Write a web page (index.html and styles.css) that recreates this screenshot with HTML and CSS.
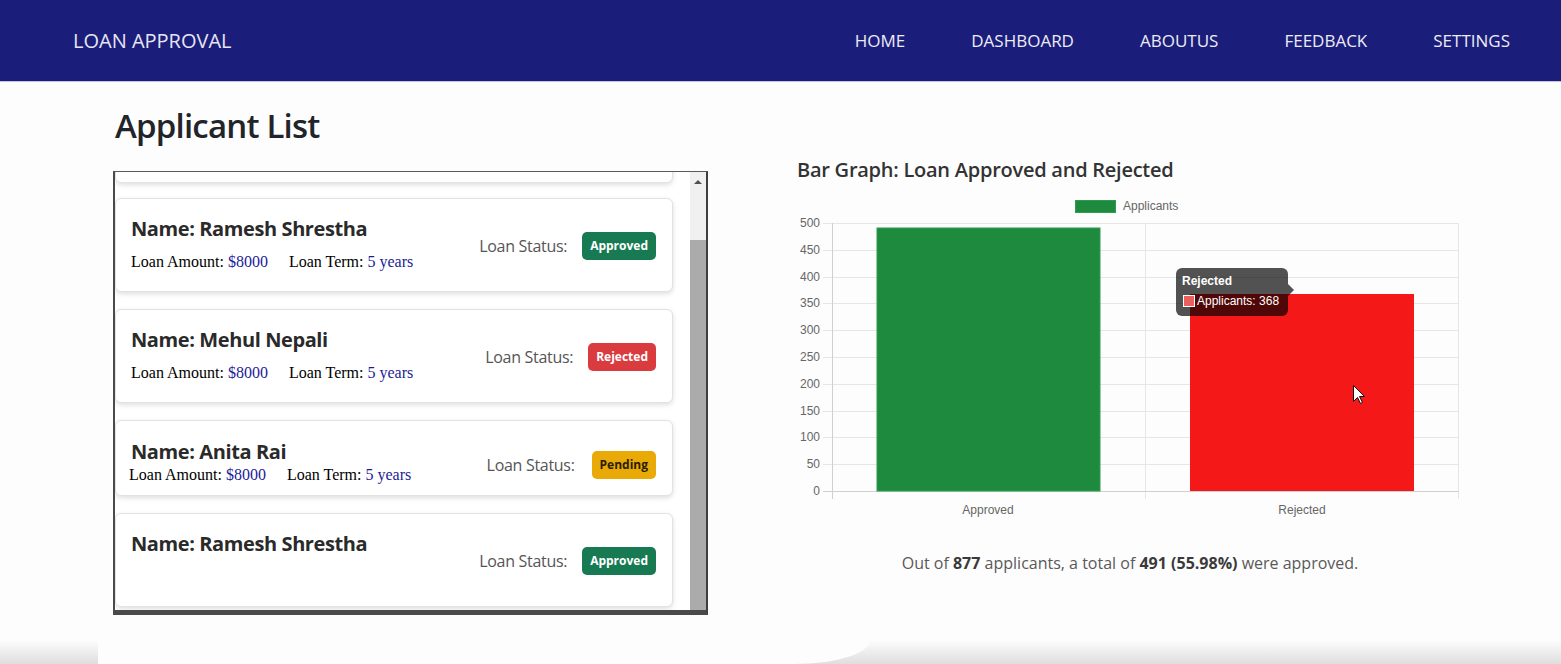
FILE: index.html
```html
<!DOCTYPE html>
<html lang="en">
<head>
<meta charset="utf-8">
<title>Loan Approval</title>
<link rel="stylesheet" href="styles.css">
</head>
<body>
<nav class="navbar">
  <a class="brand" href="#">LOAN APPROVAL</a>
  <ul class="nav-links">
    <li><a href="#">HOME</a></li>
    <li><a href="#">DASHBOARD</a></li>
    <li><a href="#">ABOUTUS</a></li>
    <li><a href="#">FEEDBACK</a></li>
    <li><a href="#">SETTINGS</a></li>
  </ul>
</nav>

<main class="main">
  <section class="left-col">
    <h1 class="page-title">Applicant List</h1>
    <div class="list-box">
      <div class="list-scroll">
        <div class="card card-partial"></div>

        <div class="card">
          <div class="card-info">
            <h5 class="name">Name: Ramesh Shrestha</h5>
            <p class="details">Loan Amount: <span class="val">$8000</span><span class="sep"></span>Loan Term: <span class="val">5 years</span></p>
          </div>
          <div class="status"><span class="status-label">Loan Status:</span><span class="badge badge-approved">Approved</span></div>
        </div>

        <div class="card">
          <div class="card-info">
            <h5 class="name">Name: Mehul Nepali</h5>
            <p class="details">Loan Amount: <span class="val">$8000</span><span class="sep"></span>Loan Term: <span class="val">5 years</span></p>
          </div>
          <div class="status"><span class="status-label">Loan Status:</span><span class="badge badge-rejected">Rejected</span></div>
        </div>

        <div class="card card-short">
          <div class="card-info">
            <h5 class="name">Name: Anita Rai</h5>
            <p class="details">Loan Amount: <span class="val">$8000</span><span class="sep"></span>Loan Term: <span class="val">5 years</span></p>
          </div>
          <div class="status"><span class="status-label">Loan Status:</span><span class="badge badge-pending">Pending</span></div>
        </div>

        <div class="card">
          <div class="card-info">
            <h5 class="name">Name: Ramesh Shrestha</h5>
            <p class="details"></p>
          </div>
          <div class="status"><span class="status-label">Loan Status:</span><span class="badge badge-approved">Approved</span></div>
        </div>
      </div>
      <div class="scrollbar">
        <div class="scroll-arrow"></div>
        <div class="scroll-track"><div class="scroll-thumb"></div></div>
      </div>
    </div>
  </section>

  <section class="right-col">
    <h4 class="chart-title">Bar Graph: Loan Approved and Rejected</h4>
    <svg class="chart" width="680" height="335" viewBox="0 0 680 335" xmlns="http://www.w3.org/2000/svg">
      <g class="grid" stroke="#e6e6e6" stroke-width="1">
        <line x1="33" y1="33.5" x2="669" y2="33.5"/>
        <line x1="33" y1="60.5" x2="669" y2="60.5"/>
        <line x1="33" y1="87.5" x2="669" y2="87.5"/>
        <line x1="33" y1="113.5" x2="669" y2="113.5"/>
        <line x1="33" y1="140.5" x2="669" y2="140.5"/>
        <line x1="33" y1="167.5" x2="669" y2="167.5"/>
        <line x1="33" y1="194.5" x2="669" y2="194.5"/>
        <line x1="33" y1="221.5" x2="669" y2="221.5"/>
        <line x1="33" y1="247.5" x2="669" y2="247.5"/>
        <line x1="33" y1="274.5" x2="669" y2="274.5"/>
        <line x1="355.5" y1="33" x2="355.5" y2="309"/>
        <line x1="668.5" y1="33" x2="668.5" y2="309"/>
      </g>
      <line x1="33" y1="301.5" x2="669" y2="301.5" stroke="#d0d0d0"/>
      <line x1="42.5" y1="33" x2="42.5" y2="309" stroke="#d0d0d0"/>
      <g class="ylabels" font-family="'Liberation Sans', Arial, sans-serif" font-size="12" fill="#666" text-anchor="end">
        <text x="30" y="37">500</text>
        <text x="30" y="64">450</text>
        <text x="30" y="91">400</text>
        <text x="30" y="117">350</text>
        <text x="30" y="144">300</text>
        <text x="30" y="171">250</text>
        <text x="30" y="198">200</text>
        <text x="30" y="225">150</text>
        <text x="30" y="251">100</text>
        <text x="30" y="278">50</text>
        <text x="30" y="305">0</text>
      </g>
      <rect x="87" y="38" width="223" height="263" fill="#1e8a3e" stroke="#2e9c4e" stroke-width="1"/>
      <rect x="400" y="104" width="224" height="197" fill="#f41818"/>
      <rect x="285.5" y="10.5" width="40" height="12" fill="#1e8a3e" stroke="#2e9c4e"/>
      <text x="333" y="20" font-family="'Liberation Sans', Arial, sans-serif" font-size="12" fill="#666">Applicants</text>
      <g font-family="'Liberation Sans', Arial, sans-serif" font-size="12" fill="#666" text-anchor="middle">
        <text x="198" y="324">Approved</text>
        <text x="512" y="324">Rejected</text>
      </g>
      <g class="tooltip">
        <rect x="386" y="78" width="112" height="48" rx="6" fill="rgba(0,0,0,0.68)"/>
        <path d="M498 94 L504 100 L498 106 Z" fill="rgba(0,0,0,0.68)"/>
        <text x="392" y="95" font-family="'Liberation Sans', Arial, sans-serif" font-size="12" font-weight="bold" fill="#fff">Rejected</text>
        <rect x="393.5" y="105.5" width="11" height="11" fill="#e8615e" stroke="#fff" stroke-width="1"/>
        <text x="407" y="115" font-family="'Liberation Sans', Arial, sans-serif" font-size="12" fill="#fff">Applicants: 368</text>
      </g>
      <path class="cursor" d="M563.5 195.5 L563.5 211.5 L567.5 207.5 L570.5 213.5 L572.5 212.5 L569.5 206.5 L574.5 206.5 Z" fill="#fff" stroke="#111" stroke-width="1"/>
    </svg>
    <p class="summary">Out of <strong>877</strong> applicants, a total of <strong>491 (55.98%)</strong> were approved.</p>
  </section>
</main>

<footer class="shade">
  <div class="shade-panel"></div>
</footer>
</body>
</html>
```

FILE: styles.css
```css
* { box-sizing: border-box; }

html, body {
  margin: 0;
  padding: 0;
}

body {
  width: 1561px;
  height: 664px;
  overflow: hidden;
  display: flex;
  flex-direction: column;
  background: #fdfdfd;
  font-family: "Open Sans", "Noto Sans", sans-serif;
  color: #212529;
}

/* NAVBAR */
.navbar {
  flex: 0 0 81px;
  height: 81px;
  display: flex;
  align-items: center;
  justify-content: space-between;
  padding: 0 51px 0 73px;
  background: #1b1d7a;
  box-shadow: 0 1px 0 #c3c4e4;
}

.brand {
  color: #e6e6f2;
  text-decoration: none;
  font-size: 20px;
  letter-spacing: 0;
}

.nav-links {
  list-style: none;
  margin: 0;
  padding: 0;
  display: flex;
  gap: 66px;
}

.nav-links a {
  color: #ececf4;
  text-decoration: none;
  font-size: 17px;
}

/* MAIN */
.main {
  flex: 1 1 auto;
  display: flex;
  padding: 24px 0 0 113px;
}

.left-col {
  width: 595px;
  flex: 0 0 595px;
}

.page-title {
  margin: 1px 0 25px 2px;
  font-size: 33px;
  line-height: 40px;
  font-weight: 600;
  letter-spacing: -0.8px;
  color: #212529;
}

.list-box {
  height: 444px;
  display: flex;
  border-top: 1px solid #5a5a5a;
  border-left: 2px solid #4a4a4a;
  border-right: 2px solid #3e3e3e;
  border-bottom: 5px solid #4a4a4a;
  background: #fff;
  overflow: hidden;
}

.list-scroll {
  flex: 1 1 auto;
  padding: 0 17px 0 0;
  overflow: hidden;
}

.card {
  display: flex;
  align-items: center;
  justify-content: space-between;
  height: 94px;
  margin-bottom: 17px;
  padding: 18px 16px 16px 15px;
  background: #fff;
  border: 1px solid #e2e2e2;
  border-radius: 6px;
  box-shadow: 0 2px 5px rgba(0, 0, 0, 0.13);
}

.card-partial {
  margin-top: -83px;
  margin-bottom: 15px;
}

.card-short {
  height: 76px;
  padding-top: 19px;
  padding-bottom: 9px;
}

.card-info {
  align-self: flex-start;
}

.name {
  margin: 0;
  font-size: 20px;
  line-height: 24px;
  font-weight: 700;
  letter-spacing: -0.4px;
  color: #2a2a2a;
}

.details {
  margin: 9px 0 0;
  min-height: 24px;
  font-family: "Liberation Serif", "Times New Roman", serif;
  font-size: 16px;
  line-height: 24px;
  color: #000;
}

.card-short .details {
  margin-top: 1px;
  margin-left: -2px;
  line-height: 20px;
}

.card-short .status {
  margin-top: 4px;
  gap: 17px;
}

.val {
  color: #1c1c96;
}

.sep {
  display: inline-block;
  width: 21px;
}

.status {
  display: flex;
  align-items: center;
  gap: 15px;
}

.status-label {
  font-size: 16px;
  color: #555;
  letter-spacing: -0.3px;
}

.badge {
  display: inline-block;
  height: 28px;
  line-height: 28px;
  padding: 0 8px;
  border-radius: 5px;
  font-size: 12px;
  font-weight: 700;
  color: #fff;
}

.badge-approved { background: #187a52; }
.badge-rejected { background: #d93b3f; }
.badge-pending { background: #e9aa08; color: #2a2000; }

/* SCROLLBAR */
.scrollbar {
  flex: 0 0 16px;
  display: flex;
  flex-direction: column;
  background: #f0f0f0;
}

.scroll-arrow {
  height: 20px;
  flex: 0 0 20px;
  display: flex;
  justify-content: center;
  align-items: center;
}

.scroll-arrow::before {
  content: "";
  width: 0;
  height: 0;
  border-left: 4px solid transparent;
  border-right: 4px solid transparent;
  border-bottom: 4px solid #505050;
}

.scroll-track {
  flex: 1 1 auto;
  padding-top: 48px;
  display: flex;
}

.scroll-thumb {
  flex: 1 1 auto;
  background: #ababab;
}

/* CHART */
.right-col {
  margin-left: 82px;
  width: 680px;
  flex: 0 0 680px;
}

.chart-title {
  margin: 53px 0 8px 7px;
  font-size: 20px;
  line-height: 24px;
  font-weight: 600;
  letter-spacing: -0.25px;
  color: #333;
}

.chart {
  display: block;
}

.summary {
  margin: 26px 0 0;
  text-align: center;
  font-size: 16px;
  line-height: 24px;
  color: #595959;
}

.summary strong {
  color: #3a3a3a;
  font-weight: 700;
}

/* BOTTOM SHADE */
.shade {
  flex: 0 0 24px;
  height: 24px;
  background: linear-gradient(to bottom, #fdfdfd, #dedede);
}

.shade-panel {
  margin-left: 98px;
  width: 772px;
  height: 24px;
  background: #fdfdfd;
  border-bottom-right-radius: 76px 24px;
}
```
